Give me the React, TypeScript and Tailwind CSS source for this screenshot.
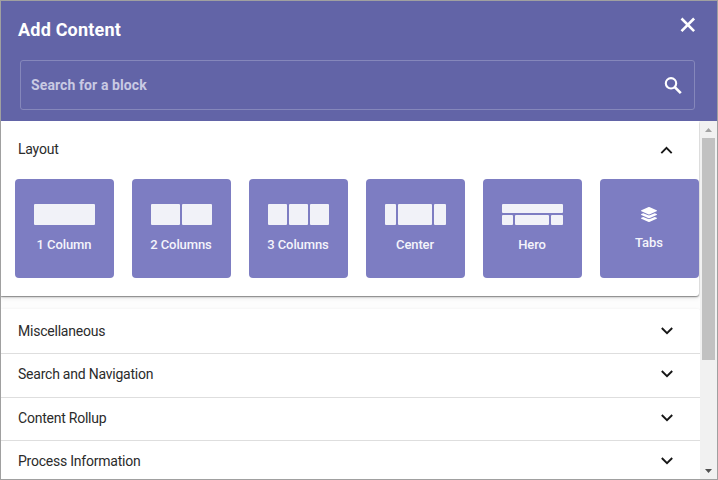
import React from "react";

const Bar = ({ className }: { className: string }) => (
  <div className={`rounded-[1px] bg-[#f1f2f8] ${className}`} />
);

const Chevron = ({ up = false }: { up?: boolean }) => (
  <svg width="24" height="24" viewBox="0 0 24 24" fill="none" stroke="#161616" strokeWidth="1.9" className="block shrink-0">
    {up ? <path d="M6.300 15.100L11.500 9.900l5.200 5.200" /> : <path d="M6.800 9l5.200 5.200L17.200 9" />}
  </svg>
);

const Card = ({ label, children }: { label: string; children: React.ReactNode }) => (
  <div className="flex h-[99px] w-[99px] shrink-0 flex-col items-center rounded bg-[#7d7dc2] pt-[25px]">
    <div className="flex h-[21px] w-[61px] gap-[2px]">{children}</div>
    <div className="mt-[10px] pr-px text-[13px] leading-5 font-medium tracking-[-0.1px] whitespace-nowrap text-[#f4f4fb]">{label}</div>
  </div>
);

const Row = ({ label, className }: { label: string; className: string }) => (
  <div className={`flex shrink-0 items-center justify-between bg-white pr-[21px] pl-[17px] ${className}`}>
    <span className="text-[14px] leading-5 tracking-[-0.23px] text-[#2b2b2b]">{label}</span>
    <Chevron />
  </div>
);

export default function App() {
  return (
    <div className="flex h-[480px] w-[718px] flex-col overflow-hidden border border-[#a0a0a0] bg-white font-['Roboto',sans-serif]">
      <header className="flex h-[120px] shrink-0 flex-col bg-[#6264a7]">
        <div className="flex h-[59px] items-start justify-between pr-[21px] pl-[17px]">
          <h1 className="mt-[17px] text-[18px] leading-6 font-bold tracking-[0.2px] text-white">Add Content</h1>
          <svg width="16" height="16" viewBox="0 0 16 16" className="mt-[16px]" stroke="#fff" strokeWidth="2.6">
            <path d="M1.500 1.500l12.600 12.600M14.100 1.500L1.500 14.100" />
          </svg>
        </div>
        <div className="ml-[19px] flex h-[50px] w-[675px] items-center justify-between rounded-[3px] border border-[#8587bb] pr-[9px] pl-[10px]">
          <span className="text-[14px] leading-5 font-bold tracking-[0.1px] text-[#c9cae3]">Search for a block</span>
          <svg width="24" height="24" viewBox="0 0 24 24" fill="none" stroke="#fff" strokeWidth="2.1">
            <circle cx="10" cy="10.300" r="5.200" />
            <path d="M13.800 14.100l6 6" strokeWidth="2.7" />
          </svg>
        </div>
      </header>
      <div className="flex min-h-0 flex-1">
        <main className="flex w-[699px] flex-col overflow-hidden bg-[#fdfdfd]">
          <section className="h-[175px] w-[698px] shrink-0 rounded-br-[3px] bg-white shadow-[0_1px_0_rgba(0,0,0,.14),0_1px_2px_rgba(0,0,0,.38),0_2px_5px_rgba(0,0,0,.08)]">
            <div className="flex h-[58px] items-center justify-between pr-[20px] pl-[17px]">
              <span className="pb-[2px] text-[14px] leading-5 tracking-[-0.23px] text-[#2b2b2b]">Layout</span>
              <Chevron up />
            </div>
            <div className="flex gap-[18px] pl-[14px]">
              <Card label="1 Column">
                <Bar className="w-full" />
              </Card>
              <Card label="2 Columns">
                <Bar className="w-[29px]" />
                <Bar className="w-[30px]" />
              </Card>
              <Card label="3 Columns">
                <Bar className="w-[19px]" />
                <Bar className="w-[19px]" />
                <Bar className="w-[19px]" />
              </Card>
              <Card label="Center">
                <Bar className="w-[11px]" />
                <Bar className="w-[34px]" />
                <Bar className="w-[12px]" />
              </Card>
              <Card label="Hero">
                <div className="flex flex-col gap-[2px]">
                  <Bar className="h-[9px] w-[61px]" />
                  <div className="flex gap-[2px]">
                    <Bar className="h-[10px] w-[11px]" />
                    <Bar className="h-[10px] w-[34px]" />
                    <Bar className="h-[10px] w-[12px]" />
                  </div>
                </div>
              </Card>
              <div className="flex h-[99px] w-[99px] shrink-0 flex-col items-center rounded bg-[#7d7dc2] pt-[28px]">
                <svg width="16" height="15" viewBox="0 0 512 512" preserveAspectRatio="none" fill="#fff" className="mr-[2px]">
                  <path d="M12.4 148l232.900 105.700c6.800 3.100 14.500 3.100 21.300 0l232.900-105.700c16.600-7.500 16.600-32.500 0-40L266.700 2.300a25.600 25.600 0 0 0-21.300 0L12.400 108c-16.500 7.500-16.500 32.500 0 40zm487.200 88.300l-58.100-26.300-161.600 73.300c-7.600 3.400-15.600 5.200-23.900 5.200s-16.300-1.700-23.900-5.200L70.500 210l-58.100 26.300c-16.500 7.500-16.500 32.500 0 40l232.900 105.600c6.800 3.100 14.500 3.100 21.300 0l233-105.600c16.500-7.500 16.500-32.500 0-40zm0 127.800l-57.900-26.200-161.900 73.400c-7.600 3.400-15.600 5.200-23.900 5.200s-16.300-1.700-23.900-5.200L70.300 337.900l-57.900 26.200c-16.500 7.500-16.500 32.500 0 40l232.900 105.600c6.800 3.100 14.500 3.100 21.300 0l233-105.600c16.500-7.500 16.500-32.500 0-40z" />
                </svg>
                <div className="mt-[11px] pr-px text-[13px] leading-5 font-medium text-[#f4f4fb]">Tabs</div>
              </div>
            </div>
          </section>
          <div className="mt-[13px] flex shrink-0 flex-col rounded-tr-[3px] bg-white shadow-[0_0_3px_rgba(0,0,0,.06)]">
            <Row label="Miscellaneous" className="h-[45px] rounded-tr-[3px] border-b border-[#dedede] pb-px" />
            <Row label="Search and Navigation" className="h-[44px] border-b border-[#dedede] pb-[3px]" />
            <Row label="Content Rollup" className="h-[43px] border-b border-[#dedede] pb-[2px]" />
            <Row label="Process Information" className="h-[43px] pb-[3px]" />
          </div>
        </main>
        <div className="flex w-[17px] shrink-0 flex-col items-center bg-[#f1f1f1]">
          <div className="flex h-[17px] items-center">
            <svg width="7" height="4" viewBox="0 0 7 4" fill="#a3a3a3">
              <path d="M0 4L3.500 0L7 4z" />
            </svg>
          </div>
          <div className="h-[222px] w-[13px] bg-[#c1c1c1]" />
          <div className="mt-auto flex h-[17px] items-center">
            <svg width="7" height="4" viewBox="0 0 7 4" fill="#505050">
              <path d="M0 0L3.500 4L7 0z" />
            </svg>
          </div>
        </div>
      </div>
    </div>
  );
}
